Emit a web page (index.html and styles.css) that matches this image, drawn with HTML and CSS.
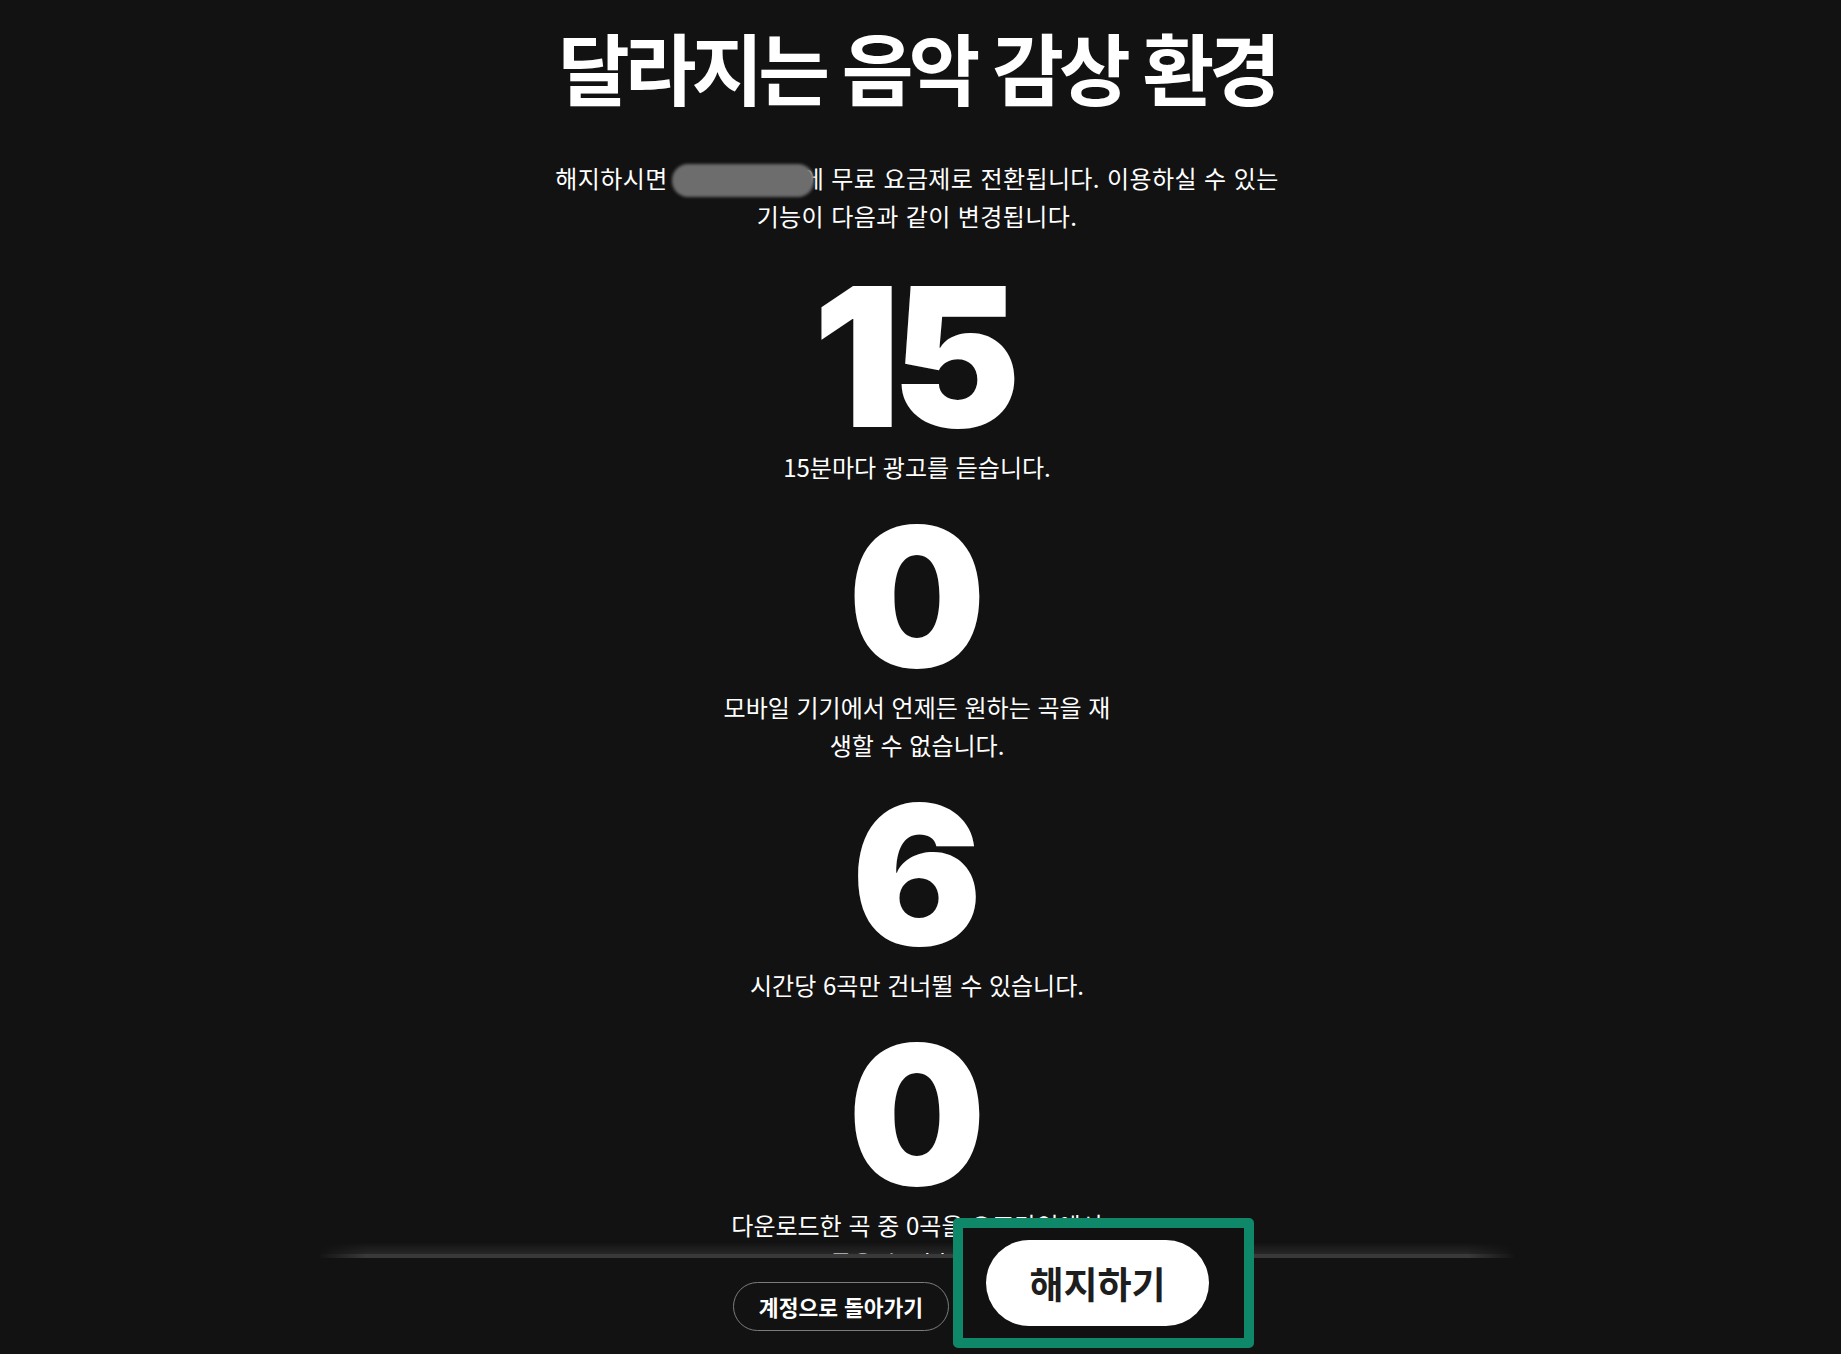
FILE: index.html
```html
<!DOCTYPE html>
<html lang="ko">
<head>
  <meta charset="UTF-8" />
  <meta name="viewport" content="width=device-width, initial-scale=1.0" />
  <title>요금제 해지</title>
  <link rel="stylesheet" href="styles.css">
</head>
<body>
  <main class="content">
    <h1 class="title">달라지는 음악 감상 환경</h1>
    <p class="intro">해지하시면<span class="redacted"></span>에 무료 요금제로 전환됩니다. 이용하실 수 있는 기능이 다음과 같이 변경됩니다.</p>

    <ul class="changes">
      <li class="change">
        <span class="change-num">15</span>
        <p class="change-text">15분마다 광고를 듣습니다.</p>
      </li>
      <li class="change">
        <span class="change-num">0</span>
        <p class="change-text">모바일 기기에서 언제든 원하는 곡을 재생할 수 없습니다.</p>
      </li>
      <li class="change">
        <span class="change-num">6</span>
        <p class="change-text">시간당 6곡만 건너뛸 수 있습니다.</p>
      </li>
      <li class="change">
        <span class="change-num">0</span>
        <p class="change-text">다운로드한 곡 중 0곡을 오프라인에서 들을 수 있습니다.</p>
      </li>
    </ul>
  </main>

  <footer class="actions-bar">
    <div class="actions">
      <a class="btn btn-outline" href="#">계정으로 돌아가기</a>
      <div class="highlight">
        <a class="btn btn-primary" href="#">해지하기</a>
      </div>
    </div>
  </footer>
</body>
</html>
```

FILE: styles.css
```css
body {
  font-family: "Noto Sans CJK KR", "Noto Sans", sans-serif;
  background: #121212;
  color: #fff;
  margin: 0;
  padding-right: 7px; /* room for the hidden scrollbar */
  height: 100vh;
  display: flex;
  flex-direction: column;
  overflow: hidden;
}
.content {
  flex: 1;
  min-height: 0;
  overflow: hidden;
  display: flex;
  flex-direction: column;
  align-items: center;
  text-align: center;
}
.title {
  font-size: 78px;
  font-weight: 700;
  line-height: 1.2;
  letter-spacing: -5px;
  margin: 20px 0 0;
}
.intro {
  font-size: 24px;
  line-height: 38px;
  letter-spacing: 0.4px;
  max-width: 740px;
  margin: 45px 0 0;
}
/* date is hidden behind a blurred pill */
.redacted {
  display: inline-block;
  position: relative;
  z-index: 1;
  width: 142px;
  height: 33px;
  margin: 0 -12px 0 4px;
  vertical-align: -9px;
  border-radius: 16px;
  background: #6d6d6d;
  filter: blur(1.5px);
}
.changes {
  list-style: none;
  margin: 42px 0 0;
  padding: 0;
  width: 395px;
  display: flex;
  flex-direction: column;
  gap: 31px;
}
.change-num {
  display: block;
  padding-right: 9px;
  font-family: Inter, "Liberation Sans", sans-serif;
  font-weight: 900;
  font-size: 194px;
  line-height: 160px;
  letter-spacing: -9px;
}
.change-text {
  font-size: 24px;
  line-height: 38px;
  margin: 11px 0 0;
}

.actions-bar {
  position: relative;
  flex-shrink: 0;
  width: 1200px;
  height: 100px;
  margin: 0 auto;
}
.actions-bar::before {
  content: "";
  position: absolute;
  left: 0;
  right: 0;
  top: -12px;
  height: 16px;
  background: linear-gradient(to bottom, rgba(255,255,255,0) 0, rgba(255,255,255,0.09) 12px, rgba(255,255,255,0.17) 12px, rgba(255,255,255,0.17) 16px);
  -webkit-mask-image: linear-gradient(to right, transparent, #000 50px, #000 calc(100% - 50px), transparent);
  mask-image: linear-gradient(to right, transparent, #000 50px, #000 calc(100% - 50px), transparent);
}
.actions {
  display: flex;
  justify-content: center;
  align-items: flex-start;
  padding-top: 28px;
}
.btn {
  box-sizing: border-box;
  display: flex;
  align-items: center;
  justify-content: center;
  border-radius: 999px;
  font-weight: 700;
  text-decoration: none;
}
.btn-outline {
  width: 216px;
  height: 49px;
  border: 1px solid #7c7c7c;
  color: #fff;
  font-size: 21.5px;
}
.highlight {
  position: relative;
  margin: -64px -153px 0 4px;
  padding: 12px 35px 12px 23px;
  border: 10px solid #0f8769;
  border-radius: 5px;
  background: #111;
}
.btn-primary {
  width: 223px;
  height: 86px;
  background: #fff;
  color: #1e1e1e;
  font-size: 37px;
}
```
